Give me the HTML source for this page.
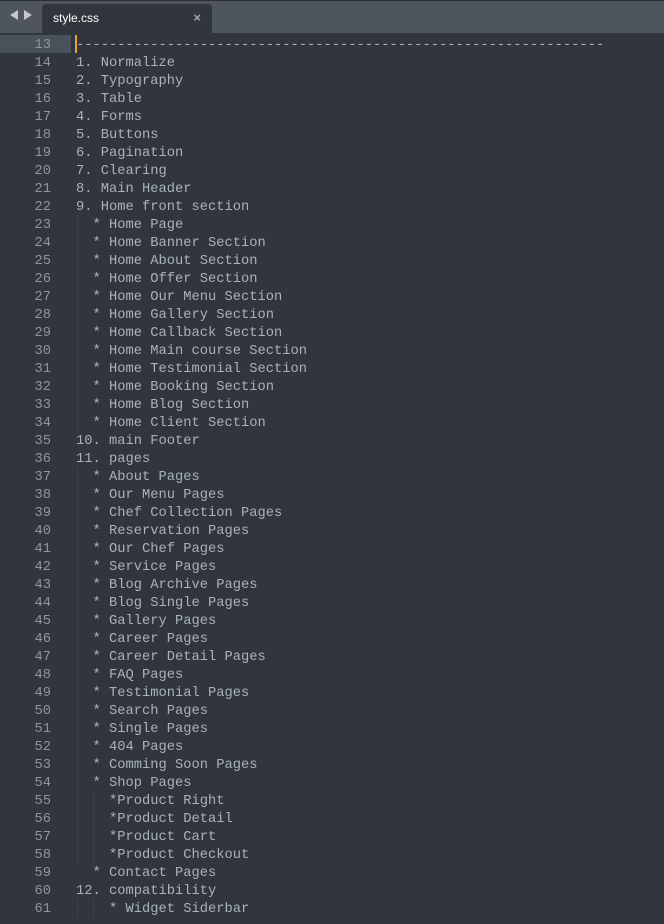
<!DOCTYPE html><html><head><style>
body{margin:0;width:664px;height:924px;background:#31363e;overflow:hidden;font-family:"Liberation Mono",monospace;}
.bar{position:absolute;left:0;top:0;width:664px;height:33px;background:#4f555d;border-top:1px solid #2a2e33;box-sizing:border-box}
.arr{position:absolute;top:10px;width:0;height:0;border-top:5px solid transparent;border-bottom:5px solid transparent}
.tab{position:absolute;left:42px;top:4px;width:170px;height:29px;background:#31363e;border-radius:4px 4px 0 0}
.tab span{position:absolute;left:11px;top:7px;font:12px "Liberation Sans",sans-serif;color:#fff}
.tab b{position:absolute;right:11px;top:6px;font:bold 13px "Liberation Sans",sans-serif;color:#a0a6ad}
.hl{position:absolute;left:0;top:35px;width:71px;height:18px;background:#49515b}
.cur{position:absolute;left:75px;top:35px;width:2px;height:18px;background:#f0a030}
.g{position:absolute;top:53px;width:0;height:864px;border-left:1px dotted #454b53}
pre{position:absolute;margin:0;top:37px;font:13.75px/18px "Liberation Mono",monospace;color:#a9b1b9}
.n{left:0;width:51px;text-align:right;color:#8d959d}
.t{left:76px}
</style></head><body>
<div class="bar"></div>
<div class="arr" style="left:10px;border-right:8px solid #c4c8cc"></div>
<div class="arr" style="left:24px;border-left:8px solid #c4c8cc"></div>
<div class="tab"><span>style.css</span><b>×</b></div>
<div class="hl"></div>
<div class="g" style="left:77px;top:215px;height:216px"></div>
<div class="g" style="left:77px;top:467px;height:396px"></div>
<div class="g" style="left:93px;top:791px;height:72px"></div>
<div class="g" style="left:77px;top:899px;height:18px"></div>
<div class="g" style="left:93px;top:899px;height:18px"></div>
<pre class="n">13
14
15
16
17
18
19
20
21
22
23
24
25
26
27
28
29
30
31
32
33
34
35
36
37
38
39
40
41
42
43
44
45
46
47
48
49
50
51
52
53
54
55
56
57
58
59
60
61</pre>
<pre class="t">----------------------------------------------------------------
1. Normalize
2. Typography
3. Table
4. Forms
5. Buttons
6. Pagination
7. Clearing
8. Main Header
9. Home front section
  * Home Page
  * Home Banner Section
  * Home About Section
  * Home Offer Section
  * Home Our Menu Section
  * Home Gallery Section
  * Home Callback Section
  * Home Main course Section
  * Home Testimonial Section
  * Home Booking Section
  * Home Blog Section
  * Home Client Section
10. main Footer
11. pages
  * About Pages
  * Our Menu Pages
  * Chef Collection Pages
  * Reservation Pages
  * Our Chef Pages
  * Service Pages
  * Blog Archive Pages
  * Blog Single Pages
  * Gallery Pages
  * Career Pages
  * Career Detail Pages
  * FAQ Pages
  * Testimonial Pages
  * Search Pages
  * Single Pages
  * 404 Pages
  * Comming Soon Pages
  * Shop Pages
    *Product Right
    *Product Detail
    *Product Cart
    *Product Checkout
  * Contact Pages
12. compatibility
    * Widget Siderbar</pre>
<div class="cur"></div>
</body></html>
